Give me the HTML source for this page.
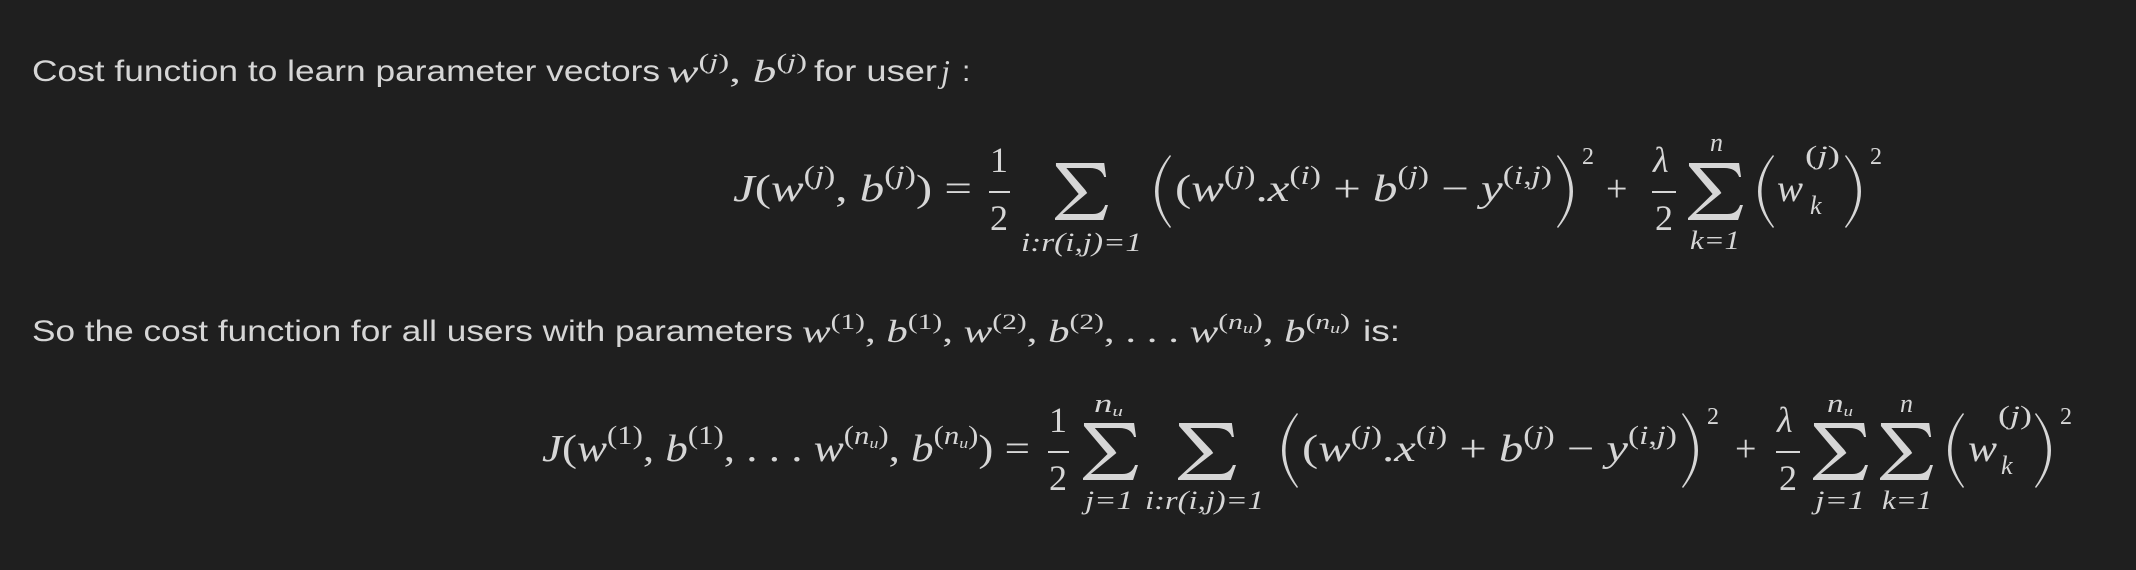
<!DOCTYPE html>
<html><head><meta charset="utf-8"><style>
html,body{margin:0;padding:0;background:#1f1f1f;}
body{width:2136px;height:570px;position:relative;overflow:hidden;color:#d6d6d6;}
.a{position:absolute;white-space:nowrap;line-height:1;transform-origin:0 0;}
.t{font-family:"Liberation Sans",sans-serif;font-size:30px;}
.m{font-family:"Liberation Serif",serif;font-size:38px;}
.ms{font-family:"Liberation Serif",serif;font-size:26px;font-style:italic;}
.im{font-family:"Liberation Serif",serif;font-size:32px;}
i{font-style:italic;}
.s{font-size:26px;position:relative;top:-17px;}
.im .s{font-size:22px;top:-13px;}
.u{font-size:15px;position:relative;top:4px;}
.bar{position:absolute;height:2px;background:#d6d6d6;}
svg{position:absolute;}
</style></head><body>

<!-- Line 1 -->
<div class="a t fit" style="left:32px;top:57px;--w:628">Cost function to learn parameter vectors</div>
<div class="a im fit" style="left:667px;top:55px;--w:140"><i>w</i><span class="s">(<i>j</i>)</span>, <i>b</i><span class="s">(<i>j</i>)</span></div>
<div class="a t fit" style="left:814px;top:57px;--w:123">for user</div>
<div class="a im" style="left:941px;top:55px"><i>j</i></div>
<div class="a t" style="left:962px;top:57px">:</div>

<!-- Eq 1 -->
<div class="a m fit" style="left:733px;top:170px;--w:239"><i>J</i>(<i>w</i><span class="s">(<i>j</i>)</span>, <i>b</i><span class="s">(<i>j</i>)</span>) =</div>
<div class="a m" style="left:990px;top:142px;font-size:36px">1</div>
<div class="bar" style="left:989px;top:191px;width:21px"></div>
<div class="a m" style="left:990px;top:200px;font-size:36px">2</div>
<svg style="left:1055px;top:163px" width="53" height="57" viewBox="0 0 56 57" preserveAspectRatio="none"><path d="M1,0 H52 L54,14 H52 Q49,5 37,5 H12 L32,27 L34,30 L8,51 H40 Q50,51 53,42 H56 L51,57 H0 V55 L25,31 L1,3 Z" fill="#d6d6d6"/></svg>
<div class="a ms fit" style="left:1021px;top:230px;--w:121">i:r(i,j)=1</div>
<svg style="left:1155px;top:155px" width="16" height="73" viewBox="0 0 16 73" preserveAspectRatio="none"><path d="M15,0 Q0,18 0,36.5 Q0,55 15,73 L16,72 Q3.5,55 3.5,36.5 Q3.5,18 16,1 Z" fill="#d6d6d6"/></svg>
<div class="a m fit" style="left:1175px;top:170px;--w:377">(<i>w</i><span class="s">(<i>j</i>)</span>.<i>x</i><span class="s">(<i>i</i>)</span> + <i>b</i><span class="s">(<i>j</i>)</span> − <i>y</i><span class="s">(<i>i</i>,<i>j</i>)</span></div>
<svg style="left:1557px;top:155px" width="16" height="73" viewBox="0 0 16 73" preserveAspectRatio="none"><path d="M1,0 Q16,18 16,36.5 Q16,55 1,73 L0,72 Q12.5,55 12.5,36.5 Q12.5,18 0,1 Z" fill="#d6d6d6"/></svg>
<div class="a m" style="left:1582px;top:145px;font-size:24px">2</div>
<div class="a m" style="left:1606px;top:170px">+</div>
<div class="a m" style="left:1653px;top:142px;font-size:36px"><i>λ</i></div>
<div class="bar" style="left:1652px;top:191px;width:24px"></div>
<div class="a m" style="left:1655px;top:200px;font-size:36px">2</div>
<svg style="left:1688px;top:163px" width="55" height="57" viewBox="0 0 56 57" preserveAspectRatio="none"><path d="M1,0 H52 L54,14 H52 Q49,5 37,5 H12 L32,27 L34,30 L8,51 H40 Q50,51 53,42 H56 L51,57 H0 V55 L25,31 L1,3 Z" fill="#d6d6d6"/></svg>
<div class="a ms" style="left:1710px;top:130px">n</div>
<div class="a ms fit" style="left:1690px;top:228px;--w:50">k=1</div>
<svg style="left:1758px;top:155px" width="16" height="73" viewBox="0 0 16 73" preserveAspectRatio="none"><path d="M15,0 Q0,18 0,36.5 Q0,55 15,73 L16,72 Q3.5,55 3.5,36.5 Q3.5,18 16,1 Z" fill="#d6d6d6"/></svg>
<div class="a m fit" style="left:1777px;top:170px;--w:26"><i>w</i></div>
<div class="a ms fit" style="left:1805px;top:143px;--w:35;font-style:normal">(<i>j</i>)</div>
<div class="a ms" style="left:1810px;top:193px">k</div>
<svg style="left:1845px;top:155px" width="16" height="73" viewBox="0 0 16 73" preserveAspectRatio="none"><path d="M1,0 Q16,18 16,36.5 Q16,55 1,73 L0,72 Q12.5,55 12.5,36.5 Q12.5,18 0,1 Z" fill="#d6d6d6"/></svg>
<div class="a m" style="left:1870px;top:145px;font-size:24px">2</div>

<!-- Line 2 -->
<div class="a t fit" style="left:32px;top:317px;--w:761">So the cost function for all users with parameters</div>
<div class="a im fit" style="left:802px;top:315px;--w:548"><i>w</i><span class="s">(1)</span>, <i>b</i><span class="s">(1)</span>, <i>w</i><span class="s">(2)</span>, <i>b</i><span class="s">(2)</span>, . . . <i>w</i><span class="s">(<i>n<span class="u">u</span></i>)</span>, <i>b</i><span class="s">(<i>n<span class="u">u</span></i>)</span></div>
<div class="a t fit" style="left:1363px;top:317px;--w:37">is:</div>

<!-- Eq 2 -->
<div class="a m fit" style="left:542px;top:430px;--w:488"><i>J</i>(<i>w</i><span class="s">(1)</span>, <i>b</i><span class="s">(1)</span>, . . . <i>w</i><span class="s">(<i>n<span class="u">u</span></i>)</span>, <i>b</i><span class="s">(<i>n<span class="u">u</span></i>)</span>) =</div>
<div class="a m" style="left:1049px;top:402px;font-size:36px">1</div>
<div class="bar" style="left:1048px;top:451px;width:21px"></div>
<div class="a m" style="left:1049px;top:460px;font-size:36px">2</div>
<svg style="left:1083px;top:423px" width="55" height="57" viewBox="0 0 56 57" preserveAspectRatio="none"><path d="M1,0 H52 L54,14 H52 Q49,5 37,5 H12 L32,27 L34,30 L8,51 H40 Q50,51 53,42 H56 L51,57 H0 V55 L25,31 L1,3 Z" fill="#d6d6d6"/></svg>
<div class="a ms fit" style="left:1094px;top:391px;--w:29">n<span class="u">u</span></div>
<div class="a ms fit" style="left:1085px;top:488px;--w:48">j=1</div>
<svg style="left:1178px;top:423px" width="58" height="57" viewBox="0 0 56 57" preserveAspectRatio="none"><path d="M1,0 H52 L54,14 H52 Q49,5 37,5 H12 L32,27 L34,30 L8,51 H40 Q50,51 53,42 H56 L51,57 H0 V55 L25,31 L1,3 Z" fill="#d6d6d6"/></svg>
<div class="a ms fit" style="left:1145px;top:488px;--w:119">i:r(i,j)=1</div>
<svg style="left:1282px;top:413px" width="16" height="75" viewBox="0 0 16 73" preserveAspectRatio="none"><path d="M15,0 Q0,18 0,36.5 Q0,55 15,73 L16,72 Q3.5,55 3.5,36.5 Q3.5,18 16,1 Z" fill="#d6d6d6"/></svg>
<div class="a m fit" style="left:1302px;top:430px;--w:375">(<i>w</i><span class="s">(<i>j</i>)</span>.<i>x</i><span class="s">(<i>i</i>)</span> + <i>b</i><span class="s">(<i>j</i>)</span> − <i>y</i><span class="s">(<i>i</i>,<i>j</i>)</span></div>
<svg style="left:1682px;top:413px" width="16" height="75" viewBox="0 0 16 73" preserveAspectRatio="none"><path d="M1,0 Q16,18 16,36.5 Q16,55 1,73 L0,72 Q12.5,55 12.5,36.5 Q12.5,18 0,1 Z" fill="#d6d6d6"/></svg>
<div class="a m" style="left:1707px;top:405px;font-size:24px">2</div>
<div class="a m" style="left:1735px;top:430px">+</div>
<div class="a m" style="left:1777px;top:402px;font-size:36px"><i>λ</i></div>
<div class="bar" style="left:1776px;top:451px;width:24px"></div>
<div class="a m" style="left:1779px;top:460px;font-size:36px">2</div>
<svg style="left:1813px;top:423px" width="55" height="57" viewBox="0 0 56 57" preserveAspectRatio="none"><path d="M1,0 H52 L54,14 H52 Q49,5 37,5 H12 L32,27 L34,30 L8,51 H40 Q50,51 53,42 H56 L51,57 H0 V55 L25,31 L1,3 Z" fill="#d6d6d6"/></svg>
<div class="a ms fit" style="left:1827px;top:391px;--w:26">n<span class="u">u</span></div>
<div class="a ms fit" style="left:1815px;top:488px;--w:50">j=1</div>
<svg style="left:1880px;top:423px" width="53" height="57" viewBox="0 0 56 57" preserveAspectRatio="none"><path d="M1,0 H52 L54,14 H52 Q49,5 37,5 H12 L32,27 L34,30 L8,51 H40 Q50,51 53,42 H56 L51,57 H0 V55 L25,31 L1,3 Z" fill="#d6d6d6"/></svg>
<div class="a ms" style="left:1900px;top:391px">n</div>
<div class="a ms fit" style="left:1882px;top:488px;--w:50">k=1</div>
<svg style="left:1948px;top:413px" width="16" height="75" viewBox="0 0 16 73" preserveAspectRatio="none"><path d="M15,0 Q0,18 0,36.5 Q0,55 15,73 L16,72 Q3.5,55 3.5,36.5 Q3.5,18 16,1 Z" fill="#d6d6d6"/></svg>
<div class="a m fit" style="left:1968px;top:430px;--w:29"><i>w</i></div>
<div class="a ms fit" style="left:1998px;top:403px;--w:34;font-style:normal">(<i>j</i>)</div>
<div class="a ms" style="left:2001px;top:453px">k</div>
<svg style="left:2035px;top:413px" width="16" height="75" viewBox="0 0 16 73" preserveAspectRatio="none"><path d="M1,0 Q16,18 16,36.5 Q16,55 1,73 L0,72 Q12.5,55 12.5,36.5 Q12.5,18 0,1 Z" fill="#d6d6d6"/></svg>
<div class="a m" style="left:2060px;top:405px;font-size:24px">2</div>

<script>
document.querySelectorAll('.fit').forEach(function(e){
  var w=parseFloat(getComputedStyle(e).getPropertyValue('--w'));
  var r=e.getBoundingClientRect().width;
  if(w&&r) e.style.transform='scaleX('+(w/r)+')';
});
</script>
</body></html>
